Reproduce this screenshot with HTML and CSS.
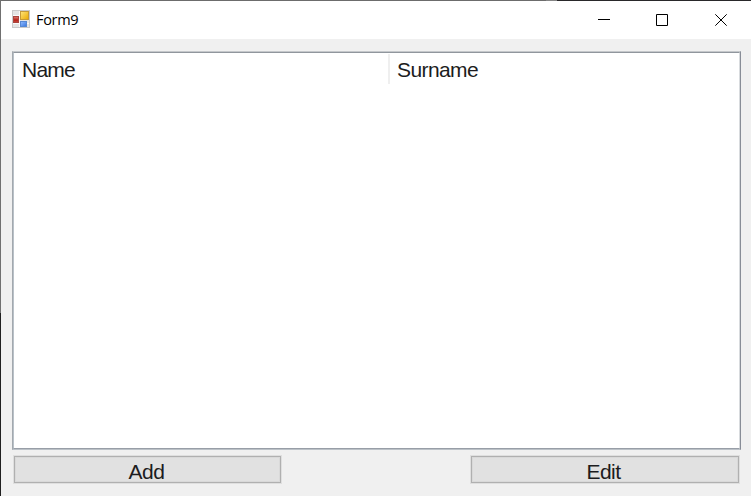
FILE: index.html
```html
<!DOCTYPE html>
<html lang="en">
<head>
<meta charset="utf-8">
<title>Form9</title>
<link rel="stylesheet" href="styles.css">
</head>
<body>
<div class="window">
  <header class="titlebar">
    <svg class="app-icon" width="18" height="18" viewBox="0 0 18 18">
      <defs>
        <linearGradient id="gold" x2="1" y2="1"><stop stop-color="#ffe67c"/><stop offset="1" stop-color="#eaa900"/></linearGradient>
        <linearGradient id="red" x2="0" y2="1"><stop stop-color="#df8074"/><stop offset=".6" stop-color="#b51f16"/><stop offset="1" stop-color="#cb5045"/></linearGradient>
        <linearGradient id="blue" x2="1" y2="1"><stop stop-color="#93bdff"/><stop offset="1" stop-color="#3675df"/></linearGradient>
      </defs>
      <rect x=".5" y=".5" width="17" height="17" fill="#e4e4e4" stroke="#c9c9c9"/>
      <path d="M1 5.5h7M7.5 1v16M1 13.5h16" stroke="#fafafa"/>
      <rect x="1.5" y="6.5" width="5" height="6" fill="url(#red)" stroke="#a9443e"/>
      <rect x="8.5" y="1.5" width="8" height="8" fill="url(#gold)" stroke="#c59a38"/>
      <rect x="8.5" y="11.5" width="6" height="5" fill="url(#blue)" stroke="#5688d3"/>
    </svg>
    <h1 class="title">Form9</h1>
    <div class="controls">
      <svg width="12" height="12" viewBox="0 0 12 12"><path d="M0 5.5h12"/></svg>
      <svg width="12" height="12" viewBox="0 0 12 12"><path d="M.5 .5h11v11H.5z"/></svg>
      <svg class="close" width="12" height="12" viewBox="0 0 12 12"><path d="M.3 .3l11.4 11.4M11.7 .3L.3 11.7"/></svg>
    </div>
  </header>
  <main class="client">
    <div class="list">
      <div class="list-inner">
        <div class="columns">
          <div class="column first"><span class="label">Name</span></div>
          <div class="column second"><span class="label">Surname</span></div>
        </div>
      </div>
    </div>
    <div class="actions">
      <button class="button add"><span class="label">Add</span></button>
      <button class="button edit"><span class="label">Edit</span></button>
    </div>
  </main>
</div>
</body>
</html>
```
FILE: styles.css
```css
* { box-sizing: border-box; }
body { margin: 0; }
.window {
  width: 751px;
  height: 496px;
  display: grid;
  grid-template-rows: 38px 1fr;
  padding: 1px 0 0 1px;
  background:
    linear-gradient(#707070 313px, #202020 313px) 0 0 / 1px 100% no-repeat,
    linear-gradient(to right, #6c6c6c 546px, #858585 546px 557px, #29282a 557px) 0 0 / 100% 1px no-repeat,
    #f0f0f0;
}
.titlebar {
  display: flex;
  align-items: center;
  background: #fff;
  padding-left: 11px;
}
.app-icon { display: block; margin-top: -2px; }
.title {
  margin: 0 0 0 6px;
  font: 400 14.5px/20px "Open Sans", sans-serif;
  letter-spacing: -0.3px;
  color: #000;
}
.controls {
  display: flex;
  gap: 46px;
  margin: 0 24px 0 auto;
}
.controls svg { display: block; fill: none; stroke: #000; stroke-width: 1; }
.controls .close { margin-left: 1px; }
.client {
  display: flex;
  flex-direction: column;
  background: #f0f0f0;
  padding: 12px 10px 12px 11px;
}
.list {
  height: 399px;
  border: 1px solid;
  border-color: #c5c8cb #888d97 #bbc1c7 #a2a8ae;
}
.list-inner {
  height: 100%;
  border: 1px solid;
  border-color: #90969d #d8dbde #989ea7 #b9c1c8;
  background: #fff;
}
.columns {
  display: grid;
  grid-template-columns: 376px 1fr;
  height: 31px;
  padding-top: 1px;
}
.column { display: flex; padding: 4px 0 0 8px; }
.first { border-right: 2px solid #efefef; }
.second { padding-left: 7px; }
.label {
  display: block;
  font: 400 21px/24px "Liberation Sans", Arial, sans-serif;
  letter-spacing: -0.75px;
  color: #1c1c20;
  white-space: nowrap;
}
.second .label { letter-spacing: -0.6px; }
.actions {
  display: flex;
  justify-content: space-between;
  padding: 6px 2px 0;
}
.button {
  width: 268px;
  height: 27px;
  padding: 3px 0 0;
  display: flex;
  justify-content: center;
  border: 1px solid #b0b0b0;
  background: #e1e1e1;
  box-shadow: 0 0 0 1px #dfdfdf, inset 0 0 0 1px #d9d9d9;
}
.button .label { letter-spacing: -0.5px; }
.add { width: 267px; padding-right: 2px; }
.edit { padding-right: 3px; }
```
